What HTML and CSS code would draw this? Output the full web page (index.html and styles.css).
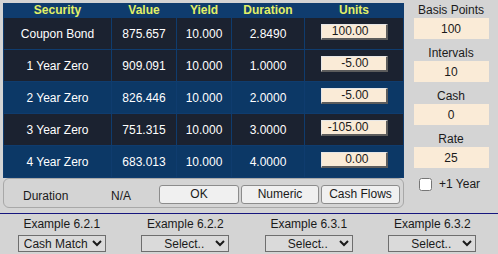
FILE: index.html
```html
<!DOCTYPE html>
<html lang="en">
<head>
  <meta charset="UTF-8" />
  <title>Cash Matching</title>
  <link rel="stylesheet" href="styles.css">
</head>
<body>

  <div class="top">
    <div class="main">
      <!-- Portfolio of bonds -->
      <table class="grid">
        <colgroup>
          <col style="width:107px"><col style="width:64px"><col style="width:54px"><col style="width:72px"><col style="width:98px">
        </colgroup>
        <tr>
          <th>Security</th><th>Value</th><th>Yield</th><th>Duration</th><th>Units</th>
        </tr>
        <tr class="dark">
          <td>Coupon Bond</td><td>875.657</td><td>10.000</td><td>2.8490</td>
          <td><input class="units" type="text" value="100.00"></td>
        </tr>
        <tr class="dark">
          <td>1 Year Zero</td><td>909.091</td><td>10.000</td><td>1.0000</td>
          <td><input class="units" type="text" value="-5.00"></td>
        </tr>
        <tr class="blue">
          <td>2 Year Zero</td><td>826.446</td><td>10.000</td><td>2.0000</td>
          <td><input class="units" type="text" value="-5.00"></td>
        </tr>
        <tr class="dark">
          <td>3 Year Zero</td><td>751.315</td><td>10.000</td><td>3.0000</td>
          <td><input class="units" type="text" value="-105.00"></td>
        </tr>
        <tr class="blue">
          <td>4 Year Zero</td><td>683.013</td><td>10.000</td><td>4.0000</td>
          <td><input class="units" type="text" value="0.00"></td>
        </tr>
      </table>

      <div class="status">
        <span class="stat-label">Duration</span>
        <span class="stat-value">N/A</span>
        <button class="btn btn-ok">OK</button>
        <button class="btn btn-num">Numeric</button>
        <button class="btn btn-cash">Cash Flows</button>
      </div>
    </div>

    <div class="side">
      <div class="field-label first">Basis Points</div>
      <div class="field-box">100</div>
      <div class="field-label">Intervals</div>
      <div class="field-box">10</div>
      <div class="field-label">Cash</div>
      <div class="field-box">0</div>
      <div class="field-label">Rate</div>
      <div class="field-box">25</div>
      <label class="year"><input type="checkbox"> +1 Year</label>
    </div>
  </div>

  <!-- Example selectors -->
  <div class="examples">
    <div class="example">
      <div class="example-label">Example 6.2.1</div>
      <select class="pick"><option>Cash Match</option></select>
    </div>
    <div class="example">
      <div class="example-label">Example 6.2.2</div>
      <select class="pick pick-empty"><option>Select..</option></select>
    </div>
    <div class="example">
      <div class="example-label">Example 6.3.1</div>
      <select class="pick pick-empty"><option>Select..</option></select>
    </div>
    <div class="example">
      <div class="example-label">Example 6.3.2</div>
      <select class="pick pick-empty"><option>Select..</option></select>
    </div>
  </div>

</body>
</html>
```

FILE: styles.css
```css
body {
  margin: 0;
  font-family: 'Liberation Sans', Arial, sans-serif;
  font-size: 12px;
  color: #1a1a1a;
  background: #d4d4d4;
}
.top {
  display: flex;
  padding: 3px 0 0 3px;
}
.main {
  width: 401px;
}
.grid {
  border-collapse: separate;
  border-spacing: 1px;
  background: #0f3c6e;
  width: 401px;
  table-layout: fixed;
}
.grid th,
.grid td {
  padding: 0;
  text-align: center;
}
.grid th {
  height: 13px;
  background: #0f3c6e;
  color: #e2f066;
  font-weight: 700;
  font-size: 12px;
  line-height: 13px;
}
.grid td {
  height: 31px;
  color: #fff;
}
.grid tr.dark td {
  background: #1b2230;
}
.grid tr.blue td {
  background: #0c3866;
}
.units {
  box-sizing: border-box;
  width: 67px;
  height: 16px;
  margin: 0 0 4px;
  padding: 0 17px 0 0;
  border-style: solid;
  border-width: 1px 2px 2px 1px;
  border-color: #e6e6e6 #5c5c5c #5c5c5c #e6e6e6;
  background: antiquewhite;
  font-family: inherit;
  font-size: 12px;
  line-height: 13px;
  color: #1a1a1a;
  text-align: right;
  vertical-align: middle;
}
.status {
  box-sizing: border-box;
  height: 30px;
  border: 1px solid #a8a8a8;
  border-radius: 6px;
  display: flex;
  align-items: center;
  padding: 2px 0 0 19px;
}
.stat-label {
  width: 88px;
  padding-top: 3px;
}
.stat-value {
  width: 48px;
  padding-top: 3px;
}
.btn {
  box-sizing: border-box;
  height: 19px;
  padding: 0;
  margin-right: 2px;
  font-family: inherit;
  font-size: 12px;
  color: #1a1a1a;
  background: #f0f0f0;
  border: 1px solid #8c8c8c;
  border-radius: 3px;
}
.btn-ok {
  width: 80px;
}
.btn-num {
  width: 78px;
}
.btn-cash {
  width: 79px;
}
.side {
  flex: 1;
  display: flex;
  flex-direction: column;
  align-items: center;
}
.field-label {
  line-height: 15px;
  margin-top: 7px;
}
.field-label.first {
  margin-top: 0;
}
.field-box {
  box-sizing: border-box;
  width: 75px;
  height: 21px;
  padding-top: 4px;
  line-height: 15px;
  background: antiquewhite;
  text-align: center;
}
.year {
  align-self: flex-start;
  display: flex;
  align-items: flex-start;
  gap: 7px;
  margin: 10px 0 0 15px;
  line-height: 12px;
}
.year input {
  margin: 0;
  width: 13px;
  height: 13px;
}
.examples {
  margin-top: 5px;
  border-top: 1px solid #16167e;
  padding: 3px 4px 0 0;
  display: grid;
  grid-template-columns: repeat(4, 1fr);
}
.example {
  display: flex;
  flex-direction: column;
  align-items: center;
}
.example-label {
  line-height: 15px;
}
.pick {
  box-sizing: border-box;
  width: 88px;
  height: 17px;
  margin-top: 3px;
  padding: 0 0 0 1px;
  font-family: inherit;
  font-size: 12px;
  color: #1a1a1a;
  background: #dadada;
  border: 1px solid #6e6e6e;
  border-radius: 0;
}
.pick-empty {
  padding-left: 18px;
}
```
